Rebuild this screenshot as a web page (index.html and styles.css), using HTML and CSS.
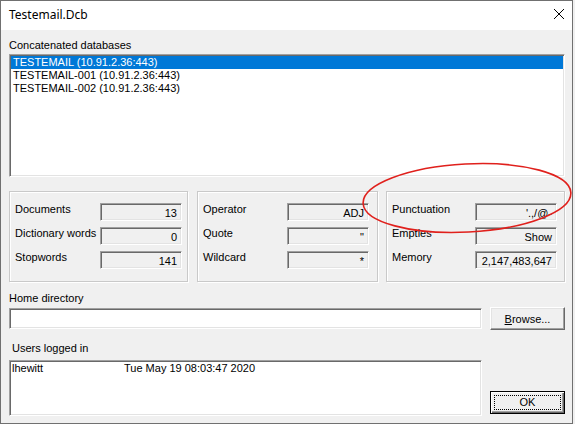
FILE: index.html
```html
<!DOCTYPE html>
<html lang="en">

<head>
    <meta charset="UTF-8">
    <meta name="viewport" content="width=device-width, initial-scale=1.0">
    <title>Testemail.Dcb</title>
    <link rel="stylesheet" href="styles.css">
</head>

<body>
    <div class="window">
        <div class="titlebar">
            <span class="title">Testemail.Dcb</span>
            <svg class="close" width="12" height="12" viewBox="0 0 12 12">
                <path d="M1 1 L11 11 M11 1 L1 11" stroke="#000" stroke-width="1" fill="none" />
            </svg>
        </div>

        <div class="client">
            <div class="label">Concatenated databases</div>
            <div class="listbox dbs">
                <div class="item selected">TESTEMAIL (10.91.2.36:443)</div>
                <div class="item">TESTEMAIL-001 (10.91.2.36:443)</div>
                <div class="item">TESTEMAIL-002 (10.91.2.36:443)</div>
            </div>

            <div class="groups">
                <div class="group g1">
                    <div class="row"><span>Documents</span><div class="field">13</div></div>
                    <div class="row"><span>Dictionary words</span><div class="field">0</div></div>
                    <div class="row"><span>Stopwords</span><div class="field">141</div></div>
                </div>
                <div class="group g2">
                    <div class="row"><span>Operator</span><div class="field">ADJ</div></div>
                    <div class="row"><span>Quote</span><div class="field">"</div></div>
                    <div class="row"><span>Wildcard</span><div class="field">*</div></div>
                </div>
                <div class="group g3">
                    <div class="row"><span>Punctuation</span><div class="field">'.,/@-</div></div>
                    <div class="row"><span>Empties</span><div class="field">Show</div></div>
                    <div class="row"><span>Memory</span><div class="field">2,147,483,647</div></div>
                </div>
            </div>

            <div class="bottom">
                <div class="label home-label">Home directory</div>
                <div class="edit"></div>
                <button class="btn browse"><u>B</u>rowse...</button>

                <div class="label users-label">Users logged in</div>
                <div class="listbox users">
                    <div class="user"><span>lhewitt</span><span>Tue May 19 08:03:47 2020</span></div>
                </div>
                <button class="btn ok"><span class="focus">OK</span></button>
            </div>
        </div>

        <!-- annotation drawn over the dialog -->
        <svg class="mark" width="575" height="424" viewBox="0 0 575 424">
            <ellipse cx="467" cy="198" rx="104" ry="34" transform="rotate(-3 467 198)"
                fill="none" stroke="#e0201c" stroke-width="1.6" />
        </svg>
    </div>
</body>

</html>
```

FILE: styles.css
```css
body {
    margin: 0;
    background-color: #f0f0f0;
    font-family: "Liberation Sans", Arial, sans-serif;
    font-size: 11px;
    color: #000;
}

.window {
    position: relative;
    width: 573px;
    height: 424px;
    box-sizing: border-box;
    border: 1px solid #707070;
    background-color: #f0f0f0;
    overflow: hidden;
}

.titlebar {
    height: 29px;
    background-color: #fff;
    display: flex;
    align-items: center;
    justify-content: space-between;
    padding: 0 7px 0 8px;
}

.title {
    font-family: "Noto Sans", "Open Sans", sans-serif;
    font-size: 12px;
    margin-top: -2px;
}

.close {
    margin-top: -3px;
}

.client {
    padding: 9px 7px 0 8px;
}

.label {
    line-height: 13px;
    height: 13px;
}

.listbox {
    background-color: #fff;
    box-sizing: border-box;
    border: 1px solid;
    border-color: #a0a0a0 #fff #fff #a0a0a0;
    box-shadow: inset 1px 1px 0 #696969, inset -1px -1px 0 #e3e3e3;
    padding: 1px;
}

.dbs {
    margin-top: 2px;
    height: 123px;
}

.item {
    height: 13px;
    line-height: 13px;
    padding-left: 2px;
}

.item.selected {
    background-color: #0078d7;
    color: #fff;
}

.groups {
    display: flex;
    margin-top: 14px;
    height: 91px;
}

.group {
    box-sizing: border-box;
    height: 91px;
    border: 1px solid #c9c9c9;
    box-shadow: inset 1px 1px 0 #fff, 1px 1px 0 #fff;
    padding: 11px 0 0 5px;
    display: flex;
    flex-direction: column;
    gap: 6px;
}

.g1 {
    width: 179px;
}

.g2 {
    width: 181px;
    margin-left: 9px;
}

.g3 {
    width: 179px;
    margin-left: 8px;
}

.row {
    display: grid;
    height: 18px;
    line-height: 13px;
}

.g1 .row {
    grid-template-columns: 85px 82px;
}

.g2 .row {
    grid-template-columns: 84px 82px;
}

.g3 .row {
    grid-template-columns: 83px 82px;
}

.field {
    box-sizing: border-box;
    height: 18px;
    border: 1px solid;
    border-color: #a0a0a0 #fff #fff #a0a0a0;
    box-shadow: inset 1px 1px 0 #696969, inset -1px -1px 0 #e3e3e3;
    background-color: #f0f0f0;
    text-align: right;
    white-space: nowrap;
    padding: 3px 4px 0 0;
    line-height: 13px;
}

.bottom {
    display: grid;
    grid-template-columns: 473px 75px;
    column-gap: 8px;
}

.home-label {
    grid-column: 1 / 3;
    margin-top: 10px;
}

.edit {
    box-sizing: border-box;
    height: 21px;
    margin-top: 3px;
    background-color: #fff;
    border: 1px solid;
    border-color: #a0a0a0 #fff #fff #a0a0a0;
    box-shadow: inset 1px 1px 0 #696969, inset -1px -1px 0 #e3e3e3;
}

.btn {
    font-family: "Liberation Sans", Arial, sans-serif;
    font-size: 11px;
    color: #000;
    background-color: #f0f0f0;
    box-sizing: border-box;
    height: 23px;
    border: 1px solid;
    border-color: #fff #696969 #696969 #fff;
    box-shadow: inset -1px -1px 0 #a0a0a0, inset 1px 1px 0 #e3e3e3;
    padding: 0;
}

.browse {
    margin-top: 2px;
}

.users-label {
    grid-column: 1 / 3;
    margin-top: 12px;
    padding-left: 3px;
}

.users {
    margin-top: 5px;
    height: 56px;
}

.user {
    display: grid;
    grid-template-columns: 112px auto;
    line-height: 13px;
    padding-left: 1px;
}

.ok {
    align-self: end;
    margin-bottom: 2px;
    border: 1px solid #000;
    box-shadow: inset 1px 1px 0 #fff, inset -1px -1px 0 #696969, inset -2px -2px 0 #a0a0a0;
    display: flex;
    align-items: center;
    justify-content: center;
    padding: 3px;
}

.focus {
    display: block;
    width: 100%;
    height: 100%;
    box-sizing: border-box;
    border: 1px dotted #000;
    line-height: 13px;
}

.mark {
    position: absolute;
    left: -1px;
    top: -1px;
    pointer-events: none;
}
```
